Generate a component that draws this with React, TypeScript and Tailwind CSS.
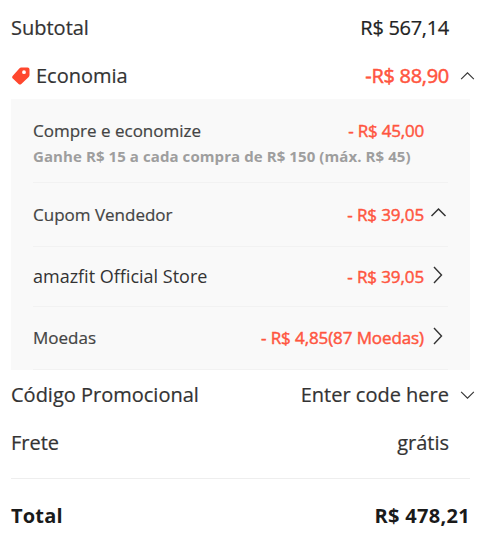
import type { ReactNode } from "react";

type Direction = "up" | "down" | "right";

const points = {
  up: "M1 9 L8 2 L15 9",
  down: "M1 2 L8 9 L15 2",
};

function Chevron({ direction, small }: { direction: Direction; small?: boolean }) {
  if (direction === "right") {
    return (
      <svg width="12" height="18" viewBox="0 0 12 18" fill="none" stroke="#333" strokeWidth="1.4">
        <path d="M2 1 L9.5 9 L2 17" />
      </svg>
    );
  }
  return (
    <svg
      width={small ? 15 : 17}
      height={small ? 10 : 11}
      viewBox="0 0 16 11"
      fill="none"
      stroke="#333"
      strokeWidth={small ? 1.2 : 1.5}
    >
      <path d={points[direction]} />
    </svg>
  );
}

function Tag() {
  return (
    <svg width="19" height="18" viewBox="0 0 19 18">
      <path
        fill="#ff472e"
        fillRule="evenodd"
        d="M10.2 .6 H16.6 Q18.5 .6 18.5 2.5 V8 Q18.5 9.1 17.7 9.9 L10.3 17 Q8.9 18.1 7.6 17 L1.8 11.6 Q.5 10.2 1.8 8.7 L8.3 1.5 Q9.1 .6 10.2 .6 Z M13 3.3 a1.9 1.9 0 1 0 0 3.8 a1.9 1.9 0 1 0 0 -3.8 Z"
      />
    </svg>
  );
}

type RowProps = {
  label: ReactNode;
  value: ReactNode;
  direction?: Direction;
};

function SummaryRow({ label, value, direction }: RowProps) {
  return (
    <div className="flex h-12 items-center pt-[2px] text-[20px] [-webkit-text-stroke:0.2px]">
      <div className="flex flex-1 items-center">{label}</div>
      <div>{value}</div>
      <div className="flex w-[26px] justify-end">
        {direction && <Chevron direction={direction} small />}
      </div>
    </div>
  );
}

const savings = [
  { label: "Cupom Vendedor", value: "- R$ 39,05", direction: "up", row: "h-16", text: "text-[#444]" },
  { label: "amazfit Official Store", value: "- R$ 39,05", direction: "right", row: "h-[60px]", text: "text-[18px] text-[#333] [-webkit-text-stroke:0px]" },
  { label: "Moedas", value: "- R$ 4,85(87 Moedas)", direction: "right", row: "h-[63px]", text: "text-[#444]" },
] as const;

export default function App() {
  return (
    <main className="h-[533px] w-[500px] overflow-hidden bg-white pl-[11px] pr-[25px] pt-[3px] font-['Open_Sans',sans-serif] text-[#333]">
      <SummaryRow
        label="Subtotal"
        value={<span className="tracking-[-0.3px] text-[#222]">R$ 567,14</span>}
      />
      <SummaryRow
        label={
          <>
            <Tag />
            <span className="ml-[6px]">Economia</span>
          </>
        }
        value={
          <span className="tracking-[-0.3px] text-[#ff5540] [-webkit-text-stroke:0.5px]">
            -R$ 88,90
          </span>
        }
        direction="up"
      />

      <section className="mr-[5px] h-[271px] bg-[#f9f9f9] pl-[22px] pr-[22px] text-[17px] [-webkit-text-stroke:0.2px]">
        <div className="h-[84px] border-b border-[#f2f2f2] pt-[19px]">
          <div className="flex h-[25px] items-center justify-between pr-6">
            <span className="text-[#444]">Compre e economize</span>
            <span className="tracking-[-0.2px] text-[#ff5540] [-webkit-text-stroke:0.45px]">
              - R$ 45,00
            </span>
          </div>
          <p className="text-[15px] font-bold leading-[26px] tracking-[0.085px] text-[#9e9e9e] [-webkit-text-stroke:0px]">
            Ganhe R$ 15 a cada compra de R$ 150 (máx. R$ 45)
          </p>
        </div>
        {savings.map((item) => (
          <div
            key={item.label}
            className={`flex items-center border-b border-[#f2f2f2] ${item.row}`}
          >
            <span className={`flex-1 ${item.text}`}>{item.label}</span>
            <span className="tracking-[-0.1px] text-[#ff5540] [-webkit-text-stroke:0.45px]">
              {item.value}
            </span>
            <span className="flex w-6 justify-center pb-1 pl-1">
              <Chevron direction={item.direction} />
            </span>
          </div>
        ))}
      </section>

      <SummaryRow label="Código Promocional" value="Enter code here" direction="down" />
      <SummaryRow label="Frete" value="grátis" />

      <div className="mr-[5px] mt-3 flex h-[75px] items-center justify-between border-t border-[#eee] text-[20px] font-bold text-[#1a1a1a]">
        <span className="tracking-[0.2px]">Total</span>
        <span className="tracking-[0.3px]">R$ 478,21</span>
      </div>
    </main>
  );
}
